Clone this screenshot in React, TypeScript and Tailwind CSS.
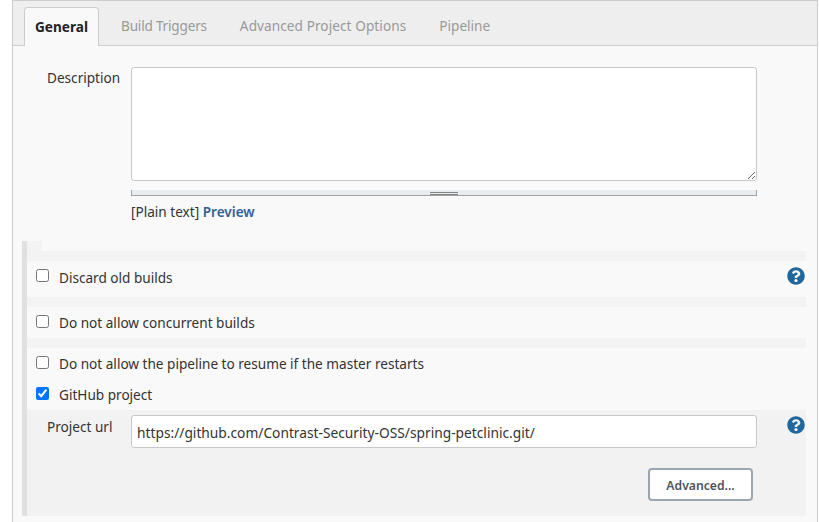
import { FaQuestionCircle } from "react-icons/fa";

const tabs = [
  { title: "General", className: "" },
  { title: "Build Triggers", className: "tracking-[-0.2px]" },
  { title: "Advanced Project Options", className: "tracking-[0.08px]" },
  { title: "Pipeline", className: "" },
];

function Gap() {
  return <div className="h-2.5 bg-[#f3f3f3]" />;
}

function CheckRow({ label, checked, className }: { label: string; checked?: boolean; className: string }) {
  return (
    <div className={`flex items-start pl-[9px] ${className}`}>
      <input type="checkbox" defaultChecked={checked} className="w-[13px] h-[13px] m-0 mt-2 shrink-0" />
      <span className="ml-[10px]">{label}</span>
    </div>
  );
}

export default function App() {
  return (
    <div className="w-[819px] h-[522px] overflow-hidden bg-white text-[#333] text-[13.6px] font-['Noto_Sans','Open_Sans',sans-serif]">
      <div className="ml-3 w-[806px] h-[522px] border border-b-0 border-[#ccc] bg-[#f9f9f9]">
        {/* Tabs */}
        <div className="h-[45px] flex items-end pl-[11px] bg-[#eeeeee] border-b border-[#ccc]">
          {tabs.map((tab, i) =>
            i === 0 ? (
              <div
                key={tab.title}
                className="h-[39px] -mb-px w-[75px] flex items-center justify-center bg-[#f9f9f9] border border-b-0 border-[#ccc] rounded-t-[4px] font-bold text-[#222]"
              >
                {tab.title}
              </div>
            ) : (
              <div key={tab.title} className={`h-[39px] -mb-px flex items-center px-[11px] ml-[11px] text-[#999] ${tab.className}`}>
                {tab.title}
              </div>
            )
          )}
        </div>

        {/* Description */}
        <div className="flex pt-[21px]">
          <label className="w-[106px] pl-[34px] leading-[22px]">Description</label>
          <div className="w-[626px] ml-3">
            <textarea className="block w-full h-[114px] bg-white border border-[#c8c8c8] rounded-[3px]" />
            <div className="mt-[9px] h-[6px] flex justify-center bg-[#e9edf0] border-x border-b border-[#9aa3a8]">
              <div className="w-7 h-[3px] mt-[2px] border-y border-[#80867f]" />
            </div>
            <div className="mt-[6px] leading-[20px]">
              [Plain text] <a className="font-semibold text-[#335f96]">Preview</a>
            </div>
          </div>
        </div>

        {/* Options */}
        <div className="mt-[19px] ml-[9px] w-[784px] border-l-[5px] border-[#e0e0e0]">
          <div className="h-2.5 w-[15px] bg-[#f3f3f3]" />
          <Gap />
          <div className="relative">
            <CheckRow label="Discard old builds" className="h-9 leading-[33px]" />
            <FaQuestionCircle className="absolute right-[1px] top-[6px] text-[18px] text-[#20679f]" />
          </div>
          <Gap />
          <CheckRow label="Do not allow concurrent builds" className="h-[31px] leading-[31px]" />
          <Gap />
          <CheckRow label="Do not allow the pipeline to resume if the master restarts" className="h-[31px] leading-[31px]" />
          <CheckRow label="GitHub project" checked className="h-[31px] leading-[31px]" />
          <div className="relative h-[106px] bg-[#f2f2f2] pt-[5px]">
            <div className="flex">
              <label className="w-[92px] pl-5 leading-[24px]">Project url</label>
              <input
                readOnly
                value="https://github.com/Contrast-Security-OSS/spring-petclinic.git/"
                className="ml-3 w-[626px] h-[33px] px-[5px] pt-[2px] bg-white border border-[#c8c8c8] rounded-[3px] outline-none text-[13.75px]"
              />
            </div>
            <FaQuestionCircle className="absolute right-[1px] top-[6px] text-[18px] text-[#20679f]" />
            <div className="flex justify-end mr-[53px] mt-[20px]">
              <button className="w-[105px] h-[33px] pt-[3px] bg-white border-2 border-[#9aa7b2] rounded-[4px] text-[12.2px] font-semibold text-[#4d545d]">
                Advanced...
              </button>
            </div>
          </div>
        </div>
      </div>
    </div>
  );
}
